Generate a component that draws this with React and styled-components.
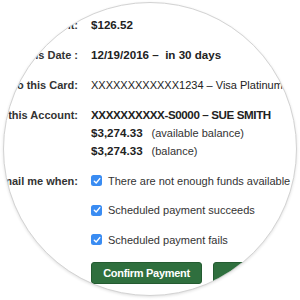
import React from "react";
import styled, { createGlobalStyle } from "styled-components";

const GlobalStyle = createGlobalStyle`
  html, body {
    margin: 0;
    padding: 0;
    background: #fff;
    font-family: "Liberation Sans", Arial, Helvetica, sans-serif;
  }
`;

const Page = styled.div`
  width: 300px;
  height: 300px;
  display: flex;
  justify-content: center;
  align-items: center;
  background: #fff;
`;

const Lens = styled.div`
  width: 294px;
  height: 294px;
  box-sizing: border-box;
  border-radius: 50%;
  border: 1px solid #d3d3d3;
  box-shadow: 0 1px 3px rgba(0, 0, 0, 0.12);
  overflow: hidden;
  background: #fff;
  margin-top: -2px;
`;

const Form = styled.div`
  display: grid;
  grid-template-columns: 74px 1fr;
  column-gap: 13px;
  row-gap: 12px;
  padding-top: 12.5px;
  color: #2b2b2b;
`;

const Label = styled.div`
  display: flex;
  justify-content: flex-end;
  white-space: nowrap;
  font-size: 11px;
  font-weight: bold;
  line-height: 18px;
  color: #333;
`;

const Value = styled.div`
  white-space: nowrap;
  font-size: ${(p) => (p.$bold ? "11.6px" : "11px")};
  font-weight: ${(p) => (p.$bold ? "bold" : "normal")};
  letter-spacing: ${(p) => p.$tight || 0};
  line-height: 18px;
  color: #222;
`;

const Stack = styled.div`
  display: flex;
  flex-direction: column;
`;

const BalanceLine = styled.div`
  display: flex;
  align-items: baseline;
  gap: 9px;
  line-height: 18px;
  white-space: nowrap;
`;

const Amount = styled.span`
  font-size: 11.6px;
  font-weight: bold;
  color: #222;
`;

const Note = styled.span`
  font-size: 11px;
  color: #333;
`;

const Checks = styled.div`
  display: flex;
  flex-direction: column;
  gap: 11.5px;
`;

const CheckRow = styled.label`
  display: flex;
  align-items: center;
  gap: 6px;
  height: 18px;
  white-space: nowrap;
  font-size: 11px;
  color: #333;
`;

const Box = styled.span`
  flex: none;
  width: 11px;
  height: 11px;
  border-radius: 2.5px;
  background: #3a8cf2;
  display: flex;
  align-items: center;
  justify-content: center;
`;

const Buttons = styled.div`
  grid-column: 2;
  display: flex;
  gap: 11px;
  margin-top: 1px;
`;

const Button = styled.button`
  flex: none;
  width: 111px;
  height: 22px;
  padding: 0;
  border: 1px solid #245b31;
  border-radius: 3px;
  background: #2f6f3e;
  color: #fff;
  font-family: "Liberation Sans", Arial, sans-serif;
  font-size: 11px;
  font-weight: bold;
  letter-spacing: -0.3px;
`;

const Check = ({ children }) => (
  <CheckRow>
    <Box>
      <svg width="8" height="8" viewBox="0 0 8 8">
        <path d="M1.3 4.2 L3.2 6 L6.8 1.6" fill="none" stroke="#fff" strokeWidth="1.4" strokeLinecap="round" strokeLinejoin="round" />
      </svg>
    </Box>
    {children}
  </CheckRow>
);

const App = () => (
  <>
    <GlobalStyle />
    <Page>
      <Lens>
        <Form>
          <Label>Payment Amount:</Label>
          <Value $bold>$126.52</Value>

          <Label>Pay on this Date :</Label>
          <Value $bold>12/19/2016 –&nbsp; in 30 days</Value>

          <Label>Pay to this Card:</Label>
          <Value>XXXXXXXXXXXX1234 – Visa Platinum</Value>

          <Label>Pay from this Account:</Label>
          <Stack>
            <Value $bold $tight="-0.39px">XXXXXXXXXX-S0000 – SUE SMITH</Value>
            <BalanceLine>
              <Amount>$3,274.33</Amount>
              <Note>(available balance)</Note>
            </BalanceLine>
            <BalanceLine>
              <Amount>$3,274.33</Amount>
              <Note>(balance)</Note>
            </BalanceLine>
          </Stack>

          <Label>Email me when:</Label>
          <Checks>
            <Check>There are not enough funds available to make the payment</Check>
            <Check>Scheduled payment succeeds</Check>
            <Check>Scheduled payment fails</Check>
          </Checks>

          <Buttons>
            <Button>Confirm Payment</Button>
            <Button>Cancel</Button>
          </Buttons>
        </Form>
      </Lens>
    </Page>
  </>
);

export default App;
